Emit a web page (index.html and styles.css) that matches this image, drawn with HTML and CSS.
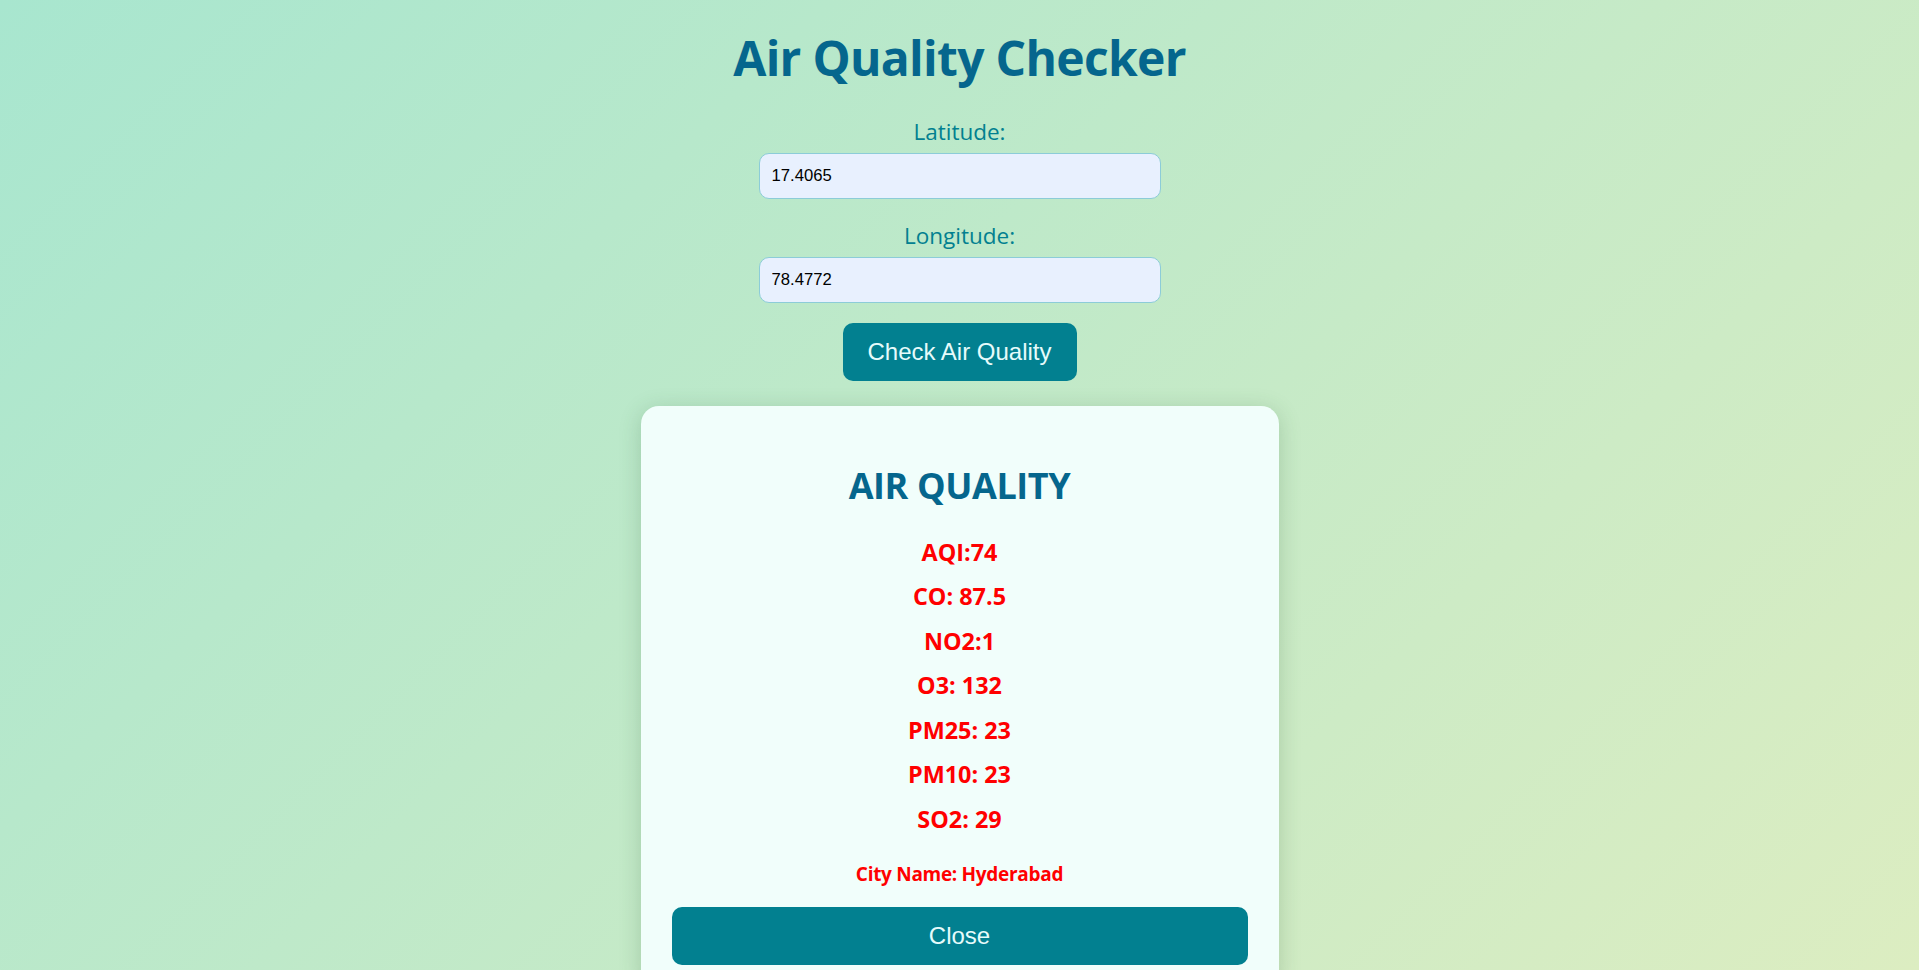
FILE: index.html
```html
<!DOCTYPE html>
<html lang="en">
<head>
<meta charset="utf-8">
<title>Air Quality Checker</title>
<link rel="stylesheet" href="styles.css">
</head>
<body>
<main class="page">
  <h1 class="title">Air Quality Checker</h1>
  <form class="form">
    <label class="label" for="lat">Latitude:</label>
    <input class="input" id="lat" type="text" value="17.4065">
    <label class="label label-second" for="lon">Longitude:</label>
    <input class="input" id="lon" type="text" value="78.4772">
    <button class="btn btn-check" type="button">Check Air Quality</button>
  </form>
  <section class="card">
    <h2 class="card-title">AIR QUALITY</h2>
    <div class="readings">
      <h3 class="reading">AQI:74</h3>
      <h3 class="reading">CO: 87.5</h3>
      <h3 class="reading">NO2:1</h3>
      <h3 class="reading">O3: 132</h3>
      <h3 class="reading">PM25: 23</h3>
      <h3 class="reading">PM10: 23</h3>
      <h3 class="reading">SO2: 29</h3>
    </div>
    <h4 class="city">City Name: Hyderabad</h4>
    <button class="btn btn-close" type="button">Close</button>
  </section>
</main>
</body>
</html>
```
FILE: styles.css
```css
html, body {
  margin: 0;
  padding: 0;
}

body {
  background: linear-gradient(135deg, #a8e6cf 0%, #dcedc1 100%) fixed;
  font-family: "Open Sans", "Noto Sans", sans-serif;
  min-height: 100vh;
}

.page {
  display: flex;
  flex-direction: column;
  align-items: center;
}

.title {
  margin: 28px 0 0;
  font-size: 48px;
  line-height: 60px;
  font-weight: 700;
  letter-spacing: -0.7px;
  color: #05668d;
}

.form {
  margin-top: 29px;
  display: flex;
  flex-direction: column;
  align-items: center;
}

.label {
  font-size: 22.5px;
  line-height: 30px;
  color: #028090;
  margin-bottom: 6px;
}

.label-second {
  margin-top: 22px;
}

.input {
  box-sizing: border-box;
  width: 402px;
  height: 46px;
  padding: 0 12px;
  border: 1px solid #8cccd8;
  border-radius: 10px;
  background: #e8f0fe;
  font-family: "Liberation Sans", Arial, sans-serif;
  font-size: 16.67px;
  color: #000;
  outline: none;
}

.btn {
  box-sizing: border-box;
  border: none;
  background: #028090;
  color: #e6fbfb;
  font-family: "Liberation Sans", Arial, sans-serif;
  font-size: 24px;
  height: 58px;
  border-radius: 10px;
  cursor: pointer;
}

.btn-check {
  margin-top: 20px;
  width: 234px;
}

.card {
  box-sizing: border-box;
  margin-top: 25px;
  width: 638px;
  padding: 0 31px 25px;
  background: #f1fefb;
  border-radius: 18px;
  box-shadow: 0 4px 22px rgba(40, 90, 50, 0.22);
  display: flex;
  flex-direction: column;
  align-items: center;
}

.card-title {
  margin: 57px 0 0;
  font-size: 36px;
  line-height: 46px;
  font-weight: 700;
  letter-spacing: -0.4px;
  color: #05668d;
}

.readings {
  margin-top: 27.6px;
  display: flex;
  flex-direction: column;
  align-items: center;
  gap: 14.5px;
}

.reading {
  margin: 0;
  font-size: 23.4px;
  line-height: 30px;
  font-weight: 700;
  color: #ff0000;
}

.city {
  margin: 27.4px 0 0;
  font-size: 19px;
  line-height: 26px;
  font-weight: 700;
  letter-spacing: -0.3px;
  color: #ff0000;
}

.btn-close {
  margin-top: 20px;
  width: 100%;
}
```
